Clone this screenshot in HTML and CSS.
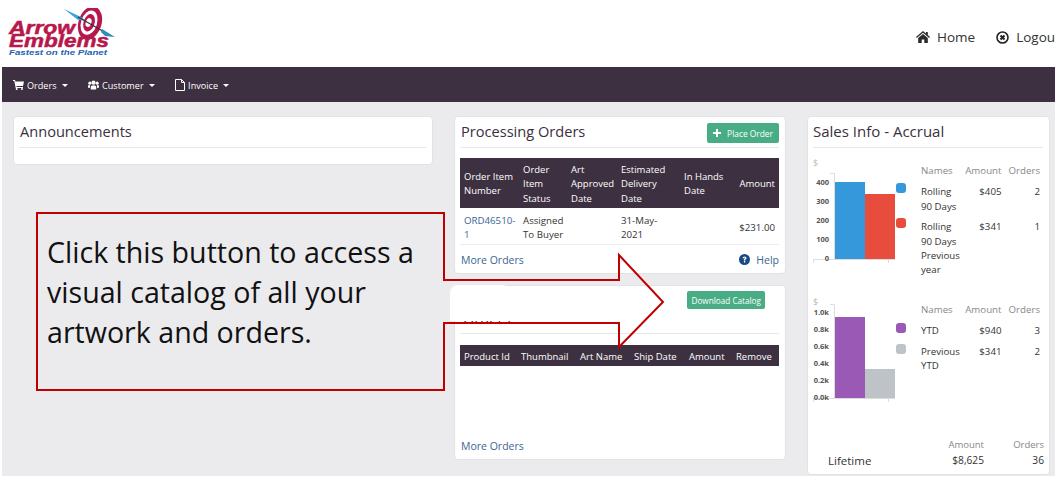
FILE: index.html
```html
<!DOCTYPE html>
<html lang="en">
<head>
<meta charset="utf-8">
<title>Arrow Emblems</title>
<link rel="stylesheet" href="styles.css">
</head>
<body>
<div class="page">
  <header class="top">
    <svg class="logo" width="110" height="50" viewBox="0 0 110 50" aria-label="Arrow Emblems">
      <g transform="rotate(18 82 15)">
        <ellipse cx="82" cy="15" rx="11.500" ry="17" fill="#b8174c"/>
        <ellipse cx="81" cy="15" rx="8" ry="12.500" fill="#fff"/>
        <ellipse cx="81" cy="15" rx="5.500" ry="9" fill="#b8174c"/>
        <ellipse cx="80.500" cy="15" rx="2.800" ry="4.500" fill="#fff"/>
      </g>
      <path d="M56 1 L73 9 L77 12 L70 12 Z" fill="#37a5dc"/>
      <path d="M70 9 L100 26" stroke="#333" stroke-width="1.200"/>
      <path d="M94 21 L107 29 L97 28 L93 24 Z" fill="#2f8fb8"/>
      <text class="logo-word" x="1" y="26" textLength="66" lengthAdjust="spacingAndGlyphs">Arrow</text>
      <text class="logo-word" x="1" y="39" textLength="100" lengthAdjust="spacingAndGlyphs">Emblems</text>
      <text class="logo-tag" x="1" y="47" textLength="98" lengthAdjust="spacingAndGlyphs">Fastest on the Planet</text>
    </svg>
    <nav class="top-links">
      <a class="top-link">
        <svg width="14" height="12" viewBox="0 0 14 12"><path d="M7 0 L10 2.500 V1 H11.800 V4 L14 6 L13.200 6.900 L7 1.800 L.8 6.900 L0 6 Z M2.200 7 L7 3 L11.800 7 V12 H8.300 V8.500 H5.700 V12 H2.200 Z" fill="#2b2b2b"/></svg>
        Home
      </a>
      <a class="top-link">
        <svg width="13" height="13" viewBox="0 0 13 13"><circle cx="6.500" cy="6.500" r="5.500" fill="none" stroke="#222" stroke-width="1.600"/><path d="M4.500 4.500 L8.500 8.500 M8.500 4.500 L4.500 8.500" stroke="#222" stroke-width="2"/></svg>
        Logout
      </a>
    </nav>
  </header>

  <nav class="menu">
    <a class="menu-item">
      <svg width="11" height="10" viewBox="0 0 11 10"><path d="M0 0 H2 L2.400 1.500 H11 L10 6 H3.400 L3.600 7 H10 V8 H2.700 L1.300 1 H0 Z" fill="#fff"/><circle cx="3.700" cy="9" r="1" fill="#fff"/><circle cx="9" cy="9" r="1" fill="#fff"/></svg>
      Orders <i class="caret"></i>
    </a>
    <a class="menu-item">
      <svg width="11" height="10" viewBox="0 0 12 10"><circle cx="6" cy="2.500" r="2.300" fill="#fff"/><circle cx="2" cy="3" r="1.700" fill="#fff"/><circle cx="10" cy="3" r="1.700" fill="#fff"/><path d="M3 10 V7 Q3 5.200 6 5.200 Q9 5.200 9 7 V10 Z M0 8 V6 Q0 5 2.200 5 V8 Z M12 8 V6 Q12 5 9.800 5 V8 Z" fill="#fff"/></svg>
      Customer <i class="caret"></i>
    </a>
    <a class="menu-item">
      <svg width="10" height="12" viewBox="0 0 10 12"><path d="M.5 .5 H6.500 L9.500 3.500 V11.500 H.5 Z M6.500 .5 V3.500 H9.500" fill="none" stroke="#fff"/></svg>
      Invoice <i class="caret"></i>
    </a>
  </nav>

  <main class="content">
    <section class="card card-ann">
      <h2 class="card-title">Announcements</h2>
    </section>

    <div class="middle">
      <section class="card card-proc">
        <div class="title-row">
          <h2 class="card-title">Processing Orders</h2>
          <a class="btn">
            <svg width="8" height="8" viewBox="0 0 8 8"><path d="M3 0 H5 V3 H8 V5 H5 V8 H3 V5 H0 V3 H3 Z" fill="#fff"/></svg>
            <span class="btn-label">Place Order</span>
          </a>
        </div>
        <table class="data proc-table">
          <thead>
            <tr>
              <th class="c1">Order Item Number</th>
              <th class="c2">Order Item Status</th>
              <th class="c3">Art Approved Date</th>
              <th class="c4">Estimated Delivery Date</th>
              <th class="c5">In Hands Date</th>
              <th class="num">Amount</th>
            </tr>
          </thead>
          <tbody>
            <tr>
              <td><a class="link">ORD46510-1</a></td>
              <td>Assigned To Buyer</td>
              <td></td>
              <td>31-May-2021</td>
              <td></td>
              <td class="num">$231.00</td>
            </tr>
          </tbody>
        </table>
        <div class="foot-row">
          <a class="link foot-link foot-more">More Orders</a>
          <a class="link foot-link help">
            <svg width="11" height="11" viewBox="0 0 11 11"><circle cx="5.500" cy="5.500" r="5.500" fill="#174a85"/><path d="M3.500 4.200 Q3.700 2.400 5.500 2.400 Q7.500 2.400 7.500 3.900 Q7.500 4.900 6.300 5.500 V6.400 H4.900 V5 Q6 4.500 6 3.900 Q6 3.500 5.500 3.500 Q5 3.500 4.900 4.300 Z M4.900 7 H6.300 V8.400 H4.900 Z" fill="#fff"/></svg>
            Help
          </a>
        </div>
      </section>

      <section class="card card-cart">
        <div class="title-row cart-title">
          <h2 class="card-title">Orders</h2>
          <a class="btn btn-catalog"><span>Download Catalog</span></a>
        </div>
        <table class="data cart-table">
          <thead>
            <tr>
              <th class="d1">Product Id</th>
              <th class="d2">Thumbnail</th>
              <th class="d3">Art Name</th>
              <th class="d4">Ship Date</th>
              <th class="d5">Amount</th>
              <th>Remove</th>
            </tr>
          </thead>
        </table>
        <div class="foot-row foot-bottom">
          <a class="link foot-link foot-more">More Orders</a>
        </div>
        <div class="title-patch"></div>
      </section>
    </div>

    <section class="card card-sales">
      <h2 class="card-title">Sales Info - Accrual</h2>
      <div class="sales-row first">
        <svg class="chart" width="96" height="110" viewBox="0 0 96 110">
          <text class="dollar" x="0" y="11.500">$</text>
          <path class="axis" d="M17 19.500 H21.500 V105.500 M0 105.500 H82 M75.500 105.500 V109 M0.500 105.500 V109"/>
          <g class="tick">
            <text x="16" y="31">400</text><text x="16" y="50">300</text><text x="16" y="69">200</text><text x="16" y="88">100</text><text x="16" y="107">0</text>
          </g>
          <rect x="22" y="28" width="30" height="77" fill="#3498db"/>
          <rect x="52" y="40" width="30" height="65" fill="#e74c3c"/>
          <rect x="83" y="29" width="10" height="10" rx="3" fill="#3498db"/>
          <rect x="83" y="64" width="10" height="10" rx="3" fill="#e74c3c"/>
        </svg>
        <table class="stats">
          <thead><tr><th class="name">Names</th><th>Amount</th><th>Orders</th></tr></thead>
          <tbody>
            <tr><td class="name">Rolling 90 Days</td><td>$405</td><td>2</td></tr>
            <tr><td class="name">Rolling 90 Days Previous year</td><td>$341</td><td>1</td></tr>
          </tbody>
        </table>
      </div>
      <div class="sales-row second">
        <svg class="chart" width="96" height="110" viewBox="0 0 96 110">
          <text class="dollar" x="0" y="12">$</text>
          <path class="axis" d="M17 11.500 H21.500 V105.500 M0 105.500 H82 M75.500 105.500 V109 M0.500 105.500 V109"/>
          <g class="tick">
            <text x="16" y="22">1.0k</text><text x="16" y="39">0.8k</text><text x="16" y="56">0.6k</text><text x="16" y="73">0.4k</text><text x="16" y="90">0.2k</text><text x="16" y="107">0.0k</text>
          </g>
          <rect x="22" y="24" width="30" height="81" fill="#9b59b6"/>
          <rect x="52" y="76" width="30" height="29" fill="#bdc3c7"/>
          <rect x="83" y="30" width="10" height="10" rx="3" fill="#9b59b6"/>
          <rect x="83" y="51" width="10" height="10" rx="3" fill="#bdc3c7"/>
        </svg>
        <table class="stats">
          <thead><tr><th class="name">Names</th><th>Amount</th><th>Orders</th></tr></thead>
          <tbody>
            <tr><td class="name">YTD</td><td>$940</td><td>3</td></tr>
            <tr><td class="name">Previous YTD</td><td>$341</td><td>2</td></tr>
          </tbody>
        </table>
      </div>
      <div class="lifetime">
        <span class="life-label">Lifetime</span>
        <div class="life-col life-amount"><span class="life-head">Amount</span><span>$8,625</span></div>
        <div class="life-col life-orders"><span class="life-head">Orders</span><span>36</span></div>
      </div>
    </section>
  </main>

  <svg class="callout-shape" width="640" height="190" viewBox="0 0 640 190">
    <path d="M1 1 H408 V68 H583 V43 L627 90 L583 135 V111 H408 V178 H1 Z" fill="none" stroke="#c00000" stroke-width="2"/>
  </svg>
  <p class="callout-text">Click this button to access a visual catalog of all your artwork and orders.</p>
</div>
</body>
</html>
```

FILE: styles.css
```css
* { box-sizing: border-box; }
html, body { margin: 0; padding: 0; background: #fff; }
body {
  width: 1060px;
  height: 480px;
  overflow: hidden;
  font-family: "Open Sans", "Liberation Sans", sans-serif;
  color: #333;
}
.page {
  position: relative;
  width: 1053px;
  height: 476px;
  margin-left: 2px;
  background: #ebebee;
  overflow: hidden;
}
.top {
  height: 67px;
  margin-left: -2px;
  background: #fff;
  display: flex;
  justify-content: space-between;
  align-items: flex-start;
  padding: 8px 0 0 8px;
}
.logo { display: block; }
.logo-word {
  font: italic 700 18.500px "Liberation Sans", sans-serif;
  fill: #b8174c;
  stroke: #b8174c;
  stroke-width: 0.500px;
}
.logo-tag {
  font: italic 700 8px "Liberation Sans", sans-serif;
  fill: #1f62b0;
}
.top-links {
  display: flex;
  flex: none;
  width: 141px;
  gap: 21px;
  padding-top: 20px;
  margin-right: -2px;
  white-space: nowrap;
}
.top-link {
  display: flex;
  align-items: center;
  gap: 7px;
  font-size: 13.500px;
  line-height: 18px;
  color: #333;
}
.menu {
  height: 35px;
  background: #3d3040;
  display: flex;
  align-items: center;
  gap: 20.500px;
  padding: 1px 0 0 11px;
}
.menu-item {
  display: flex;
  align-items: center;
  gap: 3px;
  font-size: 9.100px;
  color: #fff;
}
.caret {
  display: block;
  width: 0;
  height: 0;
  margin-left: 2px;
  border-top: 3px solid #fff;
  border-left: 3px solid transparent;
  border-right: 3px solid transparent;
}
.content {
  display: grid;
  grid-template-columns: 420px 332px 243px;
  column-gap: 21px;
  align-items: start;
  padding: 14px 0 0 11px;
}
.middle {
  display: flex;
  flex-direction: column;
  gap: 11px;
}
.card {
  position: relative;
  background: #fff;
  border: 1px solid #e2e2e5;
  border-radius: 4px;
  padding: 0 6px 0 5px;
}
.card-title {
  margin: 0;
  font-size: 14.600px;
  font-weight: 400;
  line-height: 28px;
  padding-bottom: 2px;
  color: #3a3040;
}
.card-ann { height: 49px; }
.card-ann .card-title { border-bottom: 1px solid #e8e8e8; padding-left: 1px; }
.card-proc { height: 158px; }
.card-proc .card-title { padding-left: 1px; }
.title-row {
  display: flex;
  justify-content: space-between;
  align-items: flex-start;
  height: 31px;
  border-bottom: 1px solid #e8e8e8;
}
.btn {
  display: flex;
  align-items: center;
  gap: 6px;
  height: 20px;
  margin-top: 6px;
  padding: 0 6px;
  background: #48ad84;
  border-radius: 2px;
  color: #fff;
  font-size: 8.400px;
}
.btn-catalog {
  height: 18px;
  margin: 0 14px 0 0;
  padding: 0 4px;
  font-size: 8.200px;
}
.data {
  width: 100%;
  border-collapse: collapse;
  table-layout: fixed;
  font-size: 9.500px;
  line-height: 14.300px;
}
.data th {
  background: #3d3040;
  color: #fff;
  font-weight: 400;
  text-align: left;
  padding: 5px 4px 2px;
  vertical-align: middle;
}
.data td {
  padding: 6px 1px 2px 4px;
  border-bottom: 1px solid #eee;
  vertical-align: middle;
  font-size: 9.700px;
}
.data .num { text-align: right; padding-right: 4px; }
.proc-table { margin-top: 10px; }
.c1 { width: 59px; }
.c2 { width: 48px; }
.c3 { width: 50px; }
.c4 { width: 63px; }
.c5 { width: 53px; }
.cart-table { margin-top: 11px; }
.d1 { width: 57px; }
.d2 { width: 59px; }
.d3 { width: 54px; }
.d4 { width: 55px; }
.d5 { width: 47px; }
.link { color: #3b6593; }
.foot-row {
  display: flex;
  justify-content: space-between;
  align-items: center;
  height: 29px;
}
.foot-link {
  display: flex;
  align-items: center;
  gap: 6px;
  font-size: 10.500px;
}
.foot-more { padding-left: 1px; }
.card-cart { height: 175px; }
.cart-title {
  height: 48px;
  padding-top: 5px;
}
.cart-title .card-title {
  padding: 14px 0 0 3px;
  line-height: 26px;
}
.foot-bottom { margin-top: 65px; }
.title-patch {
  position: absolute;
  left: -5px;
  top: -1px;
  width: 62px;
  height: 36px;
  background: #fff;
  border-radius: 8px 10px 0 0;
}
.card-sales {
  height: 359px;
  display: flex;
  flex-direction: column;
}
.card-sales .card-title { border-bottom: 1px solid #e8e8e8; font-size: 15px; }
.sales-row {
  display: flex;
  gap: 12px;
}
.sales-row.first { margin-top: 6px; height: 139px; }
.sales-row.second { height: 130px; }
.chart { flex: none; display: block; }
.stats {
  width: 119px;
  height: fit-content;
  border-collapse: collapse;
  table-layout: fixed;
  font-size: 9.700px;
  line-height: 14.300px;
  margin-top: 10px;
}
.stats th {
  color: #888;
  font-weight: 400;
  text-align: right;
  padding: 0 0 7px;
}
.stats td {
  text-align: right;
  vertical-align: top;
  padding: 0 0 6.500px;
}
.stats .name { text-align: left; width: 42px; }
.dollar { font-size: 9px; fill: #bbb; }
.tick text {
  font: 700 7.500px "Open Sans", sans-serif;
  fill: #555;
  text-anchor: end;
}
.axis { fill: none; stroke: #ddd; stroke-width: 1; }
.lifetime {
  display: flex;
  align-items: flex-end;
  margin-top: auto;
  margin-right: -1px;
  padding: 0 0 7px 15px;
  font-size: 10.200px;
}
.life-label { font-size: 11.500px; flex: 1; margin-bottom: -1px; }
.life-col { display: flex; flex-direction: column; text-align: right; gap: 2px; }
.life-amount { width: 60px; }
.life-orders { width: 60px; }
.life-head { color: #888; font-size: 9.500px; }
.callout-shape {
  position: absolute;
  left: 34px;
  top: 212px;
}
.callout-text {
  position: absolute;
  left: 45px;
  top: 232px;
  width: 380px;
  margin: 0;
  font-size: 28.600px;
  line-height: 40px;
  color: #111;
}
```
